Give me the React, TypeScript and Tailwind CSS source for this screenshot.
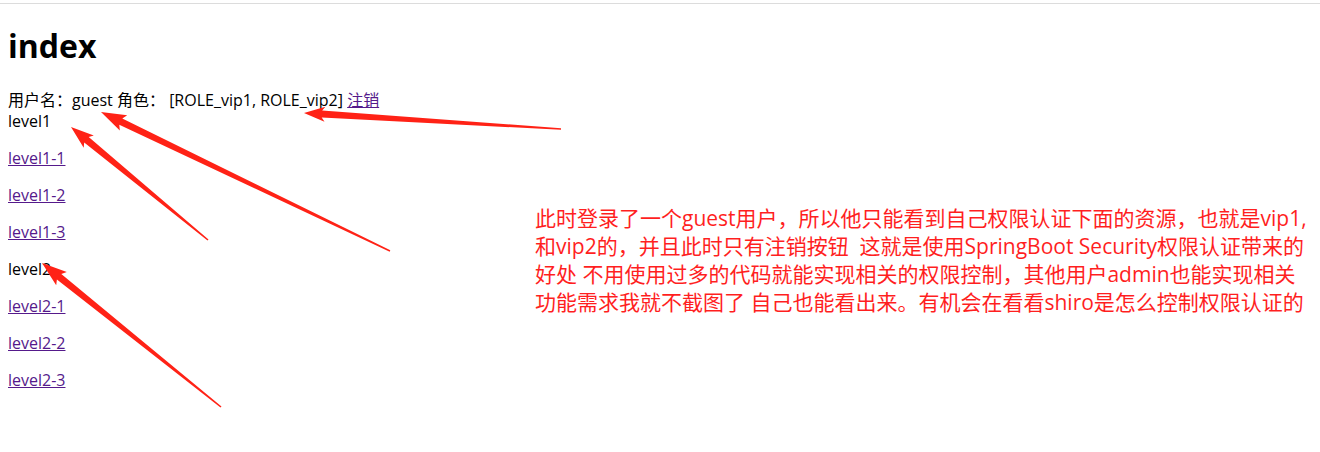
import React from 'react';

type Arrow = { x1: number; y1: number; x2: number; y2: number; head?: number; wide?: number };

const arrows: Arrow[] = [
  { x1: 561, y1: 129, x2: 304, y2: 113, head: 18, wide: 15 },
  { x1: 390, y1: 251, x2: 101, y2: 112, head: 22, wide: 17 },
  { x1: 208, y1: 240, x2: 71, y2: 127, head: 20, wide: 16 },
  { x1: 221, y1: 407, x2: 42, y2: 263, head: 22, wide: 17 },
];

// tapered annotation arrow: thin tail, thick shaft near the head, barbed tip
function arrowPoints({ x1, y1, x2, y2, head = 20, wide = 16 }: Arrow) {
  const dx = x2 - x1;
  const dy = y2 - y1;
  const len = Math.hypot(dx, dy);
  const ux = dx / len;
  const uy = dy / len;
  const nx = -uy;
  const ny = ux;
  const bx = x2 - ux * head;
  const by = y2 - uy * head;
  const shaft = 7;
  const pts = [
    [x1 + nx * 0.8, y1 + ny * 0.8],
    [bx + nx * (shaft / 2), by + ny * (shaft / 2)],
    [bx - ux * 3 + nx * (wide / 2), by - uy * 3 + ny * (wide / 2)],
    [x2, y2],
    [bx - ux * 3 - nx * (wide / 2), by - uy * 3 - ny * (wide / 2)],
    [bx - nx * (shaft / 2), by - ny * (shaft / 2)],
    [x1 - nx * 0.8, y1 - ny * 0.8],
  ];
  return pts.map((p) => p.map((v) => v.toFixed(1)).join(',')).join(' ');
}

const font = { fontFamily: '"Open Sans", "Noto Sans CJK SC", sans-serif' };

const levels = [
  { title: 'level1', links: ['level1-1', 'level1-2', 'level1-3'] },
  { title: 'level2', links: ['level2-1', 'level2-2', 'level2-3'] },
];

const note = [
  '此时登录了一个guest用户，所以他只能看到自己权限认证下面的资源，也就是vip1,',
  '和vip2的，并且此时只有注销按钮  这就是使用SpringBoot Security权限认证带来的',
  '好处 不用使用过多的代码就能实现相关的权限控制，其他用户admin也能实现相关',
  '功能需求我就不截图了 自己也能看出来。有机会在看看shiro是怎么控制权限认证的',
];

export default function App() {
  return (
    <div className="relative w-[1320px] h-[452px] overflow-hidden bg-white text-black" style={font}>
      <div className="mt-[3px] h-px bg-[#dcdcdc]" />
      <div className="flex">
        <div className="w-[535px] px-2 text-[16px] leading-[21px]">
          <h1 className="mt-[21px] mb-[22px] text-[32px] leading-[42px] font-bold">index</h1>
          <div className="leading-[22px]">
            用户名：guest 角色： [ROLE_vip1, ROLE_vip2]{' '}
            <a href="#" className="text-[#551a8b] underline">注销</a>
          </div>
          {levels.map((lv) => (
            <div key={lv.title}>
              {lv.title}
              {lv.links.map((l) => (
                <p key={l} className="my-4">
                  <a href="#" className="text-[#551a8b] underline">{l}</a>
                </p>
              ))}
            </div>
          ))}
        </div>
        <div className="mt-[200px] text-[21px] leading-[28px] text-[#ff1f1f]">
          {note.map((line) => (
            <div key={line} className="whitespace-pre">{line}</div>
          ))}
        </div>
      </div>
      <svg className="pointer-events-none absolute inset-0" width="1320" height="452">
        {arrows.map((a, i) => (
          <polygon key={i} points={arrowPoints(a)} fill="#ff2216" />
        ))}
      </svg>
    </div>
  );
}
